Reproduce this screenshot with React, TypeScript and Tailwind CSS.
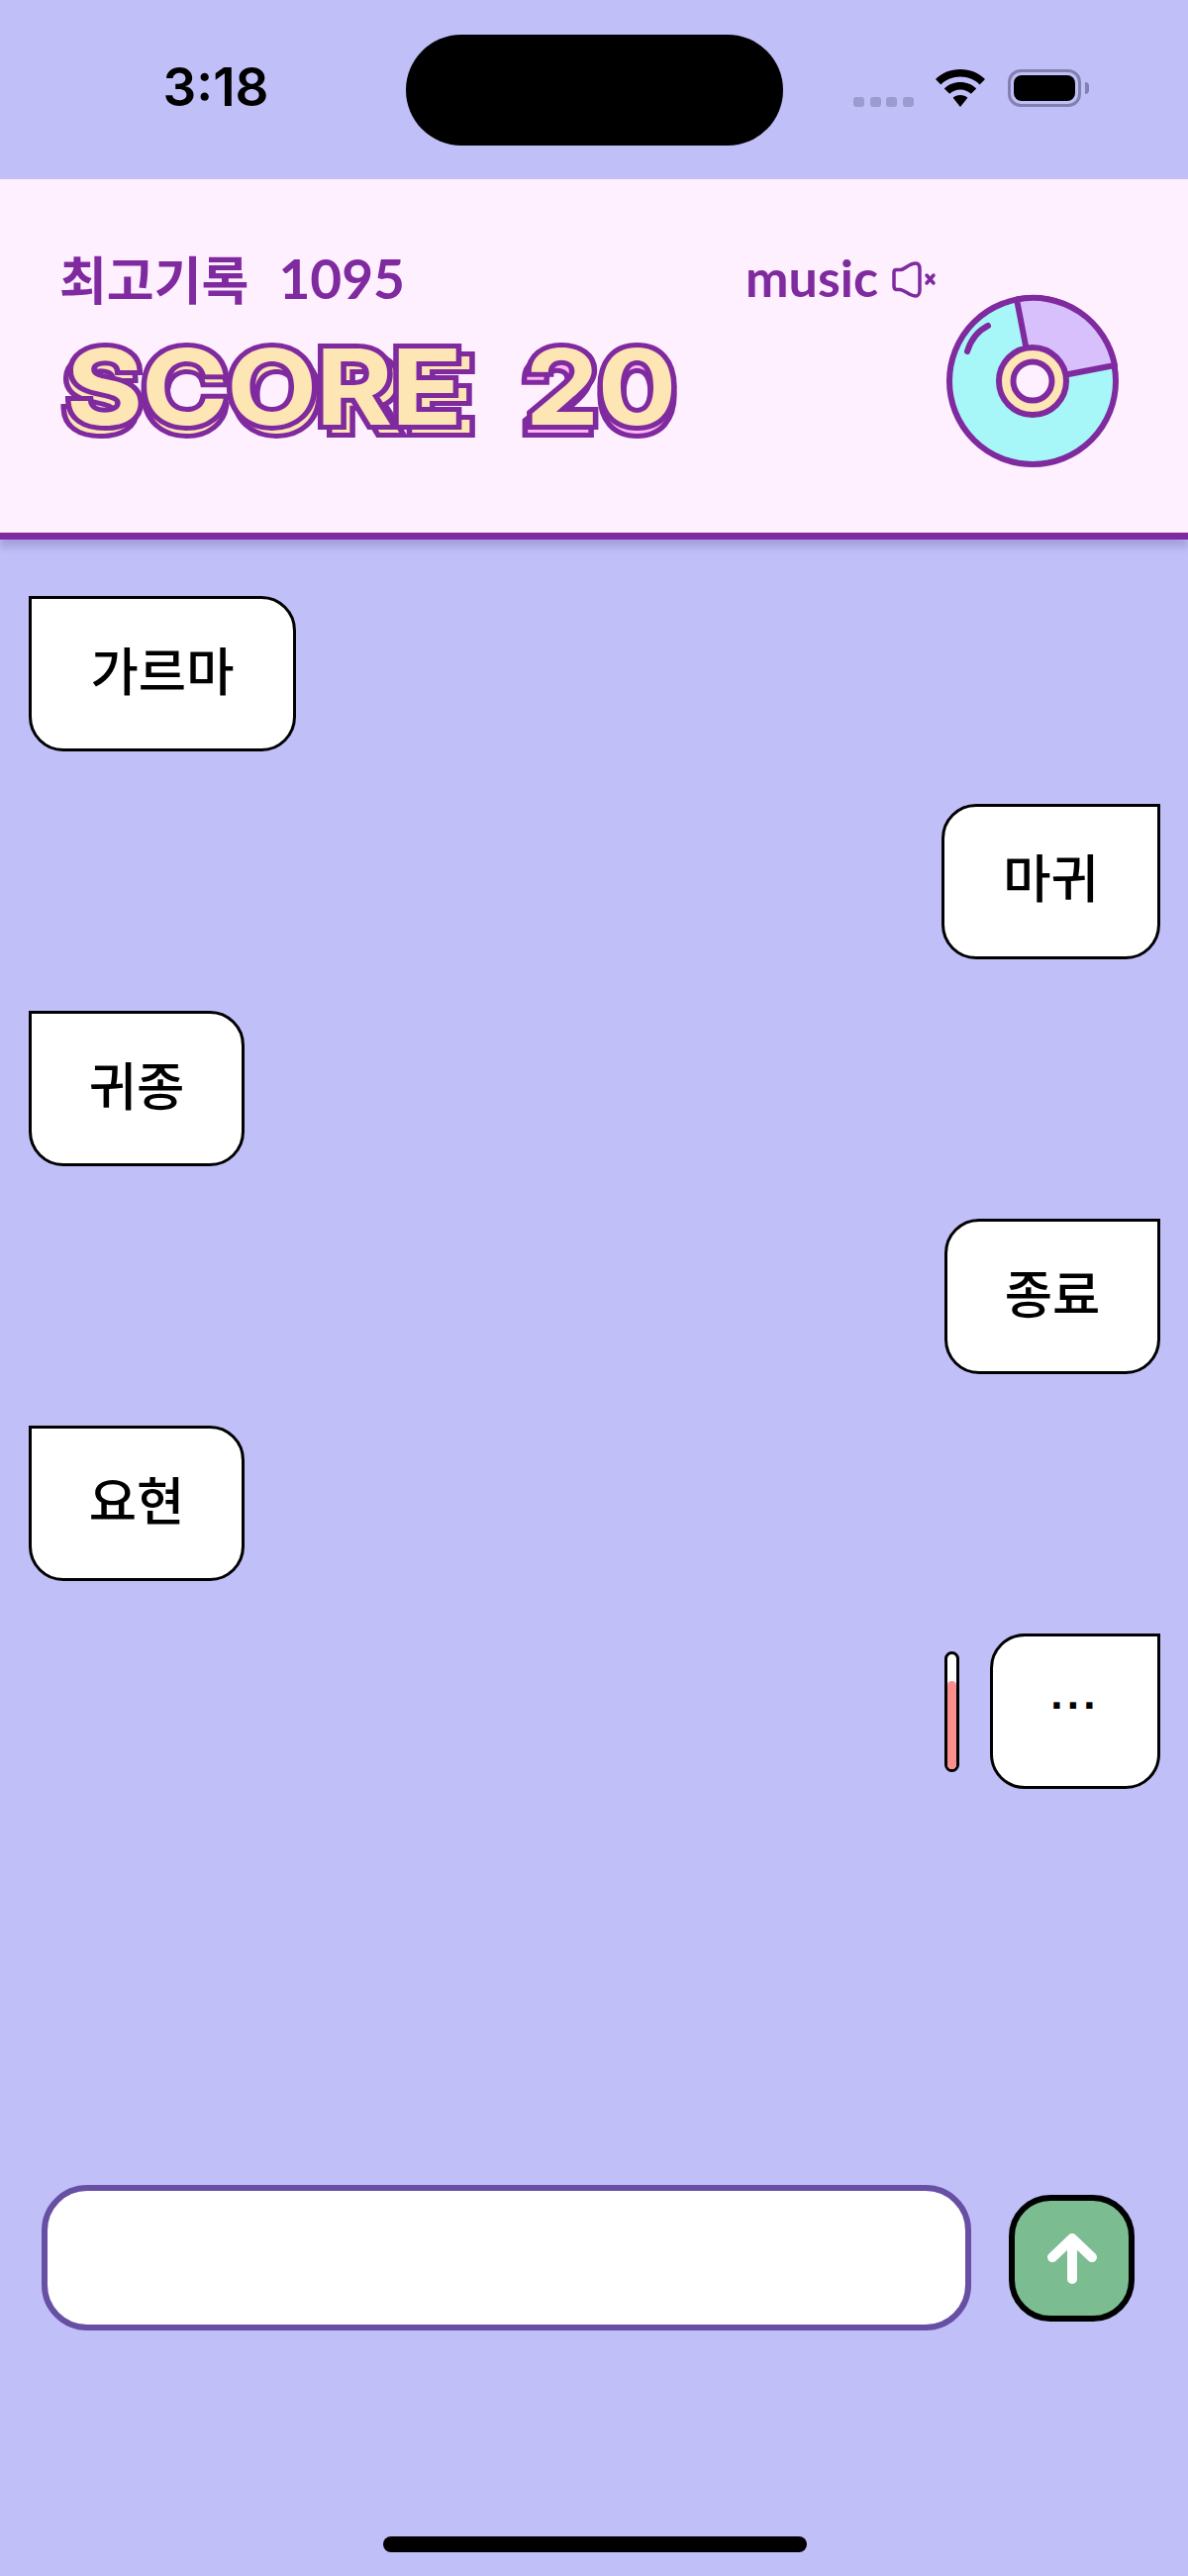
const purple = "#7f2a9f";

const Bubble = ({ text, mine, width, dots }: { text: string; mine?: boolean; width: string; dots?: boolean }) => (
  <div
    className={`flex h-[157px] items-center justify-center border-[3px] border-black bg-white leading-none text-black ${
      dots ? "pb-[34px] font-['Liberation_Sans',sans-serif] text-[44px] font-bold tracking-[4.3px]" : "pb-[11px] text-[52.5px] font-medium"
    } ${width} ${mine ? "rounded-[35px] rounded-tr-none" : "rounded-[35px] rounded-tl-none"}`}
  >
    {text}
  </div>
);

const ScoreWord = ({ text, back }: { text: string; back: string }) => (
  <span className="relative inline-block">
    <span
      aria-hidden="true"
      className="absolute left-[-4px] top-[8px] whitespace-nowrap tracking-[2.5px] [-webkit-text-stroke:10px_#7f2a9f] [paint-order:stroke_fill]"
      style={{ color: back }}
    >
      {text}
    </span>
    <span className="relative whitespace-nowrap text-[#fde6b4] [-webkit-text-stroke:10px_#7f2a9f] [paint-order:stroke_fill]">
      {text}
    </span>
  </span>
);

const StatusBar = () => (
  <div className="relative flex h-[181px] shrink-0 items-start">
    <div className="w-[436px] pt-[60px] text-center font-['Inter',sans-serif] text-[53px] font-semibold leading-[56px] text-black">
      3:18
    </div>
    <div className="absolute left-[410px] top-[35px] h-[112px] w-[381px] rounded-[56px] bg-black" />
    <div className="absolute left-[862px] top-[70px] flex items-end">
      <div className="flex gap-[5.5px]">
        <i className="h-[10px] w-[11px] rounded-[3px] bg-[#9c9bd0]" />
        <i className="h-[10px] w-[11px] rounded-[3px] bg-[#9c9bd0]" />
        <i className="h-[10px] w-[11px] rounded-[3px] bg-[#9c9bd0]" />
        <i className="h-[10px] w-[11px] rounded-[3px] bg-[#9c9bd0]" />
      </div>
      <svg width="52" height="38" viewBox="0 0 52 38" className="ml-[21px]">
        <path d="M26 0C16 0 7.5 3.6 1 10L6.4 15.4C11.4 10.6 18.4 7.6 26 7.6S40.6 10.6 45.6 15.4L51 10C44.5 3.6 36 0 26 0Z" fill="#000" />
        <path d="M26 13C19.6 13 14 15.4 9.8 19.4L15.2 24.8C18 22.2 21.8 20.6 26 20.6S34 22.2 36.8 24.8L42.2 19.4C38 15.4 32.4 13 26 13Z" fill="#000" />
        <path d="M26 26C23 26 20.6 27 18.6 28.8L26 38L33.4 28.8C31.4 27 29 26 26 26Z" fill="#000" />
      </svg>
      <div className="ml-[22px] flex items-center">
        <div className="h-[38px] w-[74px] rounded-[13px] border-[3px] border-[#8180b0] p-[3px]">
          <div className="h-full w-full rounded-[8px] bg-black" />
        </div>
        <div className="ml-[4px] h-[12px] w-[4px] rounded-r-full bg-[#8180b0]" />
      </div>
    </div>
  </div>
);

const Disc = () => (
  <svg width="176" height="176" viewBox="0 0 176 176">
    <circle cx="88" cy="88" r="84" fill="#a8f7f8" stroke={purple} strokeWidth="6" />
    <path d="M72 5.5A84 84 0 0 1 171 72L88 88Z" fill="#d8c0fd" stroke={purple} strokeWidth="6" strokeLinejoin="round" />
    <circle cx="88" cy="88" r="34" fill="#fde6b4" stroke={purple} strokeWidth="6" />
    <circle cx="88" cy="88" r="19.5" fill="#fff0ff" stroke={purple} strokeWidth="6" />
    <path d="M22 58C26 45 33 37 43 32" fill="none" stroke={purple} strokeWidth="6" strokeLinecap="round" />
  </svg>
);

const Header = () => (
  <header className="relative flex h-[364px] shrink-0 border-b-[7px] border-[#7f2a9f] bg-[#fff0ff] shadow-[0_8px_7px_rgba(70,50,120,0.2)]">
    <div className="w-[753px] pl-[60px] pt-[70px]">
      <div className="flex items-center text-[52px] font-bold leading-[60px] text-[#7f2a9f]">
        최고기록
        <span className="ml-[30px] font-['Lato',sans-serif] text-[55px]">1095</span>
      </div>
      <div className="mt-[24px] flex origin-left scale-x-[1.12] gap-[58px] pl-[6px] font-['Inter',sans-serif] text-[106px] font-bold leading-[112px] tracking-[-1.5px]">
        <ScoreWord text="SCORE" back="#fde6b4" />
        <ScoreWord text="20" back="#fdb4f4" />
      </div>
    </div>
    <div className="flex flex-col">
      <div className="flex items-center pt-[69px]">
        <span className="font-['Lato',sans-serif] text-[52px] font-bold leading-[60px] text-[#7f2a9f]">music</span>
        <svg width="46" height="38" viewBox="0 0 46 38" className="ml-[14px] mt-[6px]" fill="none" stroke={purple} strokeWidth="3.5" strokeLinecap="round" strokeLinejoin="round">
          <path d="M2 11C2 9.5 3 8.5 4.5 8.5H9C13 8 17 2 24 2C27 2 28 5 28 8V29C28 33 26 35 24 35C18 35 13 29 8 28.5H5C3 28.5 2 27 2 25Z" />
          <path d="M35 14L42 22M42 14L35 22" />
        </svg>
      </div>
      <div className="ml-[202px] mt-[-13px]">
        <Disc />
      </div>
    </div>
  </header>
);

const Gauge = () => (
  <div className="mr-[31px] mt-[18px] h-[122px] w-[15px] overflow-hidden rounded-full border-[3px] border-black bg-white">
    <div className="mt-[27px] h-full w-full rounded-t-full bg-[#fc8e8e]" />
  </div>
);

export default function App() {
  return (
    <div className="flex h-[2602px] w-[1200px] flex-col overflow-hidden bg-[#c0bff8] font-['Noto_Sans_CJK_KR','Noto_Sans',sans-serif]">
      <StatusBar />
      <Header />
      <main className="flex flex-col gap-[52.6px] pl-[29px] pr-[28px] pt-[57px]">
        <div className="flex">
          <Bubble text="가르마" width="w-[270px]" />
        </div>
        <div className="flex justify-end">
          <Bubble text="마귀" mine width="w-[221px]" />
        </div>
        <div className="flex">
          <Bubble text="귀종" width="w-[218px]" />
        </div>
        <div className="flex justify-end">
          <Bubble text="종료" mine width="w-[218px]" />
        </div>
        <div className="flex">
          <Bubble text="요현" width="w-[218px]" />
        </div>
        <div className="flex items-start justify-end">
          <Gauge />
          <Bubble text="..." mine dots width="w-[172px]" />
        </div>
      </main>
      <div className="mt-auto flex items-center pb-[208px] pl-[42px]">
        <div className="h-[147px] w-[939px] rounded-[46px] border-[6px] border-[#6750a4] bg-white" />
        <button className="ml-[38px] flex h-[128px] w-[127px] items-center justify-center rounded-[42px] border-[6px] border-black bg-[#7bbd91]">
          <svg width="50" height="52" viewBox="0 0 50 52" fill="none" stroke="#fff" strokeWidth="10" strokeLinecap="round" strokeLinejoin="round">
            <path d="M25 47V6M5 25L25 6L45 25" />
          </svg>
        </button>
      </div>
      <div className="mb-[24px] ml-[387px] h-[16px] w-[428px] shrink-0 rounded-full bg-black" />
    </div>
  );
}
